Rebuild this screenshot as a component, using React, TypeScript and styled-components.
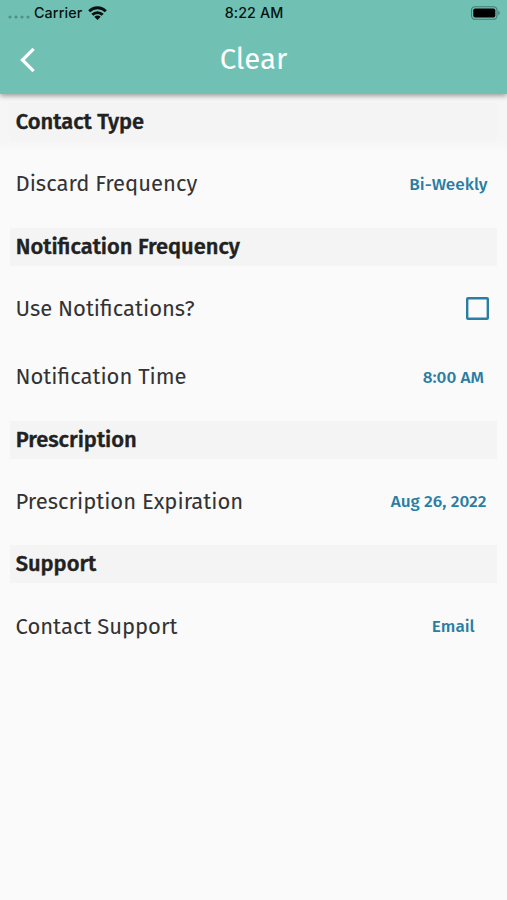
import React from "react";
import styled, { createGlobalStyle } from "styled-components";

const GlobalStyle = createGlobalStyle`
  * { box-sizing: border-box; }
  body {
    margin: 0;
    background: #fafafa;
    font-family: "Fira Sans", "Noto Sans", sans-serif;
  }
`;

const Screen = styled.div`
  width: 507px;
  height: 900px;
  overflow: hidden;
  background: #fafafa;
  display: flex;
  flex-direction: column;
`;

const TopBar = styled.header`
  position: relative;
  z-index: 1;
  flex: none;
  height: 94px;
  background: #70c1b4;
  box-shadow: 0 2px 5px rgba(0, 0, 0, 0.36);
`;

const StatusBar = styled.div`
  height: 25px;
  padding: 0 7px 0 8px;
  display: grid;
  grid-template-columns: 1fr auto 1fr;
  align-items: center;
  font-family: Inter, sans-serif;
  font-size: 14.3px;
  font-weight: 500;
  color: #06110f;
`;

const Carrier = styled.div`
  display: flex;
  align-items: center;
  letter-spacing: 0.12px;
`;

const SignalDots = styled.svg`
  margin: 9px 4px 0 0;
`;

const WifiIcon = styled.svg`
  margin-left: 6px;
`;

const Clock = styled.div`
  letter-spacing: 0.1px;
`;

const BatteryIcon = styled.svg`
  justify-self: end;
`;

const NavBar = styled.div`
  height: 69px;
  display: grid;
  grid-template-columns: 60px 1fr 60px;
  align-items: center;
`;

const BackButton = styled.button`
  width: 60px;
  height: 60px;
  border: 0;
  padding: 1px 0 0 19px;
  background: none;
  display: flex;
  align-items: center;
`;

const Title = styled.h1`
  margin: 0;
  padding-top: 1px;
  text-align: center;
  font-size: 29.3px;
  font-weight: 400;
  line-height: 40px;
  color: #fff;
`;

const Settings = styled.main`
  padding: 9px 10px 0;
  background: linear-gradient(#f6f6f6 0, #f6f6f6 48px, #fafafa 58px);
`;

const SectionHeading = styled.h2`
  margin: 0;
  height: 38px;
  padding-left: 5.7px;
  background: #f4f4f4;
  font-size: 21.9px;
  font-weight: 500;
  line-height: 38px;
  -webkit-text-stroke: 0.45px #212121;
  color: #212121;
`;

const Rows = styled.div`
  padding: 9.3px 0 9.5px;
`;

const Row = styled.div<{ $inset: number }>`
  height: 68px;
  padding: 0 ${(p) => p.$inset}px 0 5.5px;
  display: flex;
  align-items: center;
  justify-content: space-between;
`;

const Label = styled.span`
  font-size: 22px;
  line-height: 30px;
  white-space: nowrap;
  color: #333;
`;

const Value = styled.span`
  padding-top: 1px;
  font-size: 17.2px;
  font-weight: 500;
  line-height: 24px;
  white-space: nowrap;
  color: #2a7da3;
`;

const Checkbox = styled.span`
  width: 23px;
  height: 23px;
  margin-bottom: 1px;
  border-radius: 2px;
  box-shadow: inset 0 0 0 2.4px #2a7da3;
`;

type Setting = {
  label: string;
  value?: string;
  inset: number;
};

type Section = { title: string; rows: Setting[] };

const sections: Section[] = [
  {
    title: "Contact Type",
    rows: [{ label: "Discard Frequency", value: "Bi-Weekly", inset: 9.5 }],
  },
  {
    title: "Notification Frequency",
    rows: [
      { label: "Use Notifications?", inset: 8 },
      { label: "Notification Time", value: "8:00 AM", inset: 13 },
    ],
  },
  {
    title: "Prescription",
    rows: [{ label: "Prescription Expiration", value: "Aug 26, 2022", inset: 10.5 }],
  },
  {
    title: "Support",
    rows: [{ label: "Contact Support", value: "Email", inset: 22.3 }],
  },
];

export default function App() {
  return (
    <Screen>
      <GlobalStyle />
      <TopBar>
        <StatusBar>
          <Carrier>
            <SignalDots width="22" height="4" viewBox="0 0 22 4" fill="#4f9186">
              <circle cx="2" cy="2" r="1.6" />
              <circle cx="8" cy="2" r="1.6" />
              <circle cx="14" cy="2" r="1.6" />
              <circle cx="20" cy="2" r="1.6" />
            </SignalDots>
            Carrier
            <WifiIcon width="19" height="14" viewBox="0 0 19 14" fill="none" stroke="#06110f" strokeWidth="2.9">
              <path d="M1.2 5.2a11.8 11.8 0 0 1 16.6 0" />
              <path d="M4.3 8.8a7.4 7.4 0 0 1 10.4 0" />
              <path d="M9.5 14 6.3 10.8a4.5 4.5 0 0 1 6.4 0z" fill="#06110f" stroke="none" />
            </WifiIcon>
          </Carrier>
          <Clock>8:22 AM</Clock>
          <BatteryIcon width="30" height="14" viewBox="0 0 30 14">
            <rect x="1.5" y="0.7" width="25.5" height="12.6" rx="3.6" fill="none" stroke="#437c73" strokeWidth="1.1" />
            <rect x="3.3" y="2.5" width="22" height="9" rx="1.8" fill="#000" />
            <path d="M28.3 4.8c1.8.6 1.8 3.8 0 4.4z" fill="#437c73" />
          </BatteryIcon>
        </StatusBar>
        <NavBar>
          <BackButton aria-label="Back">
            <svg width="17" height="26" viewBox="0 0 17 26" fill="none" stroke="#fff" strokeWidth="3.2">
              <path d="M14.6 1.8 3.4 13l11.2 11.2" />
            </svg>
          </BackButton>
          <Title>Clear</Title>
        </NavBar>
      </TopBar>
      <Settings>
        {sections.map((section) => (
          <section key={section.title}>
            <SectionHeading>{section.title}</SectionHeading>
            <Rows>
              {section.rows.map((row) => (
                <Row key={row.label} $inset={row.inset}>
                  <Label>{row.label}</Label>
                  {row.value ? (
                    <Value>{row.value}</Value>
                  ) : (
                    <Checkbox role="checkbox" aria-checked={false} aria-label={row.label} />
                  )}
                </Row>
              ))}
            </Rows>
          </section>
        ))}
      </Settings>
    </Screen>
  );
}
